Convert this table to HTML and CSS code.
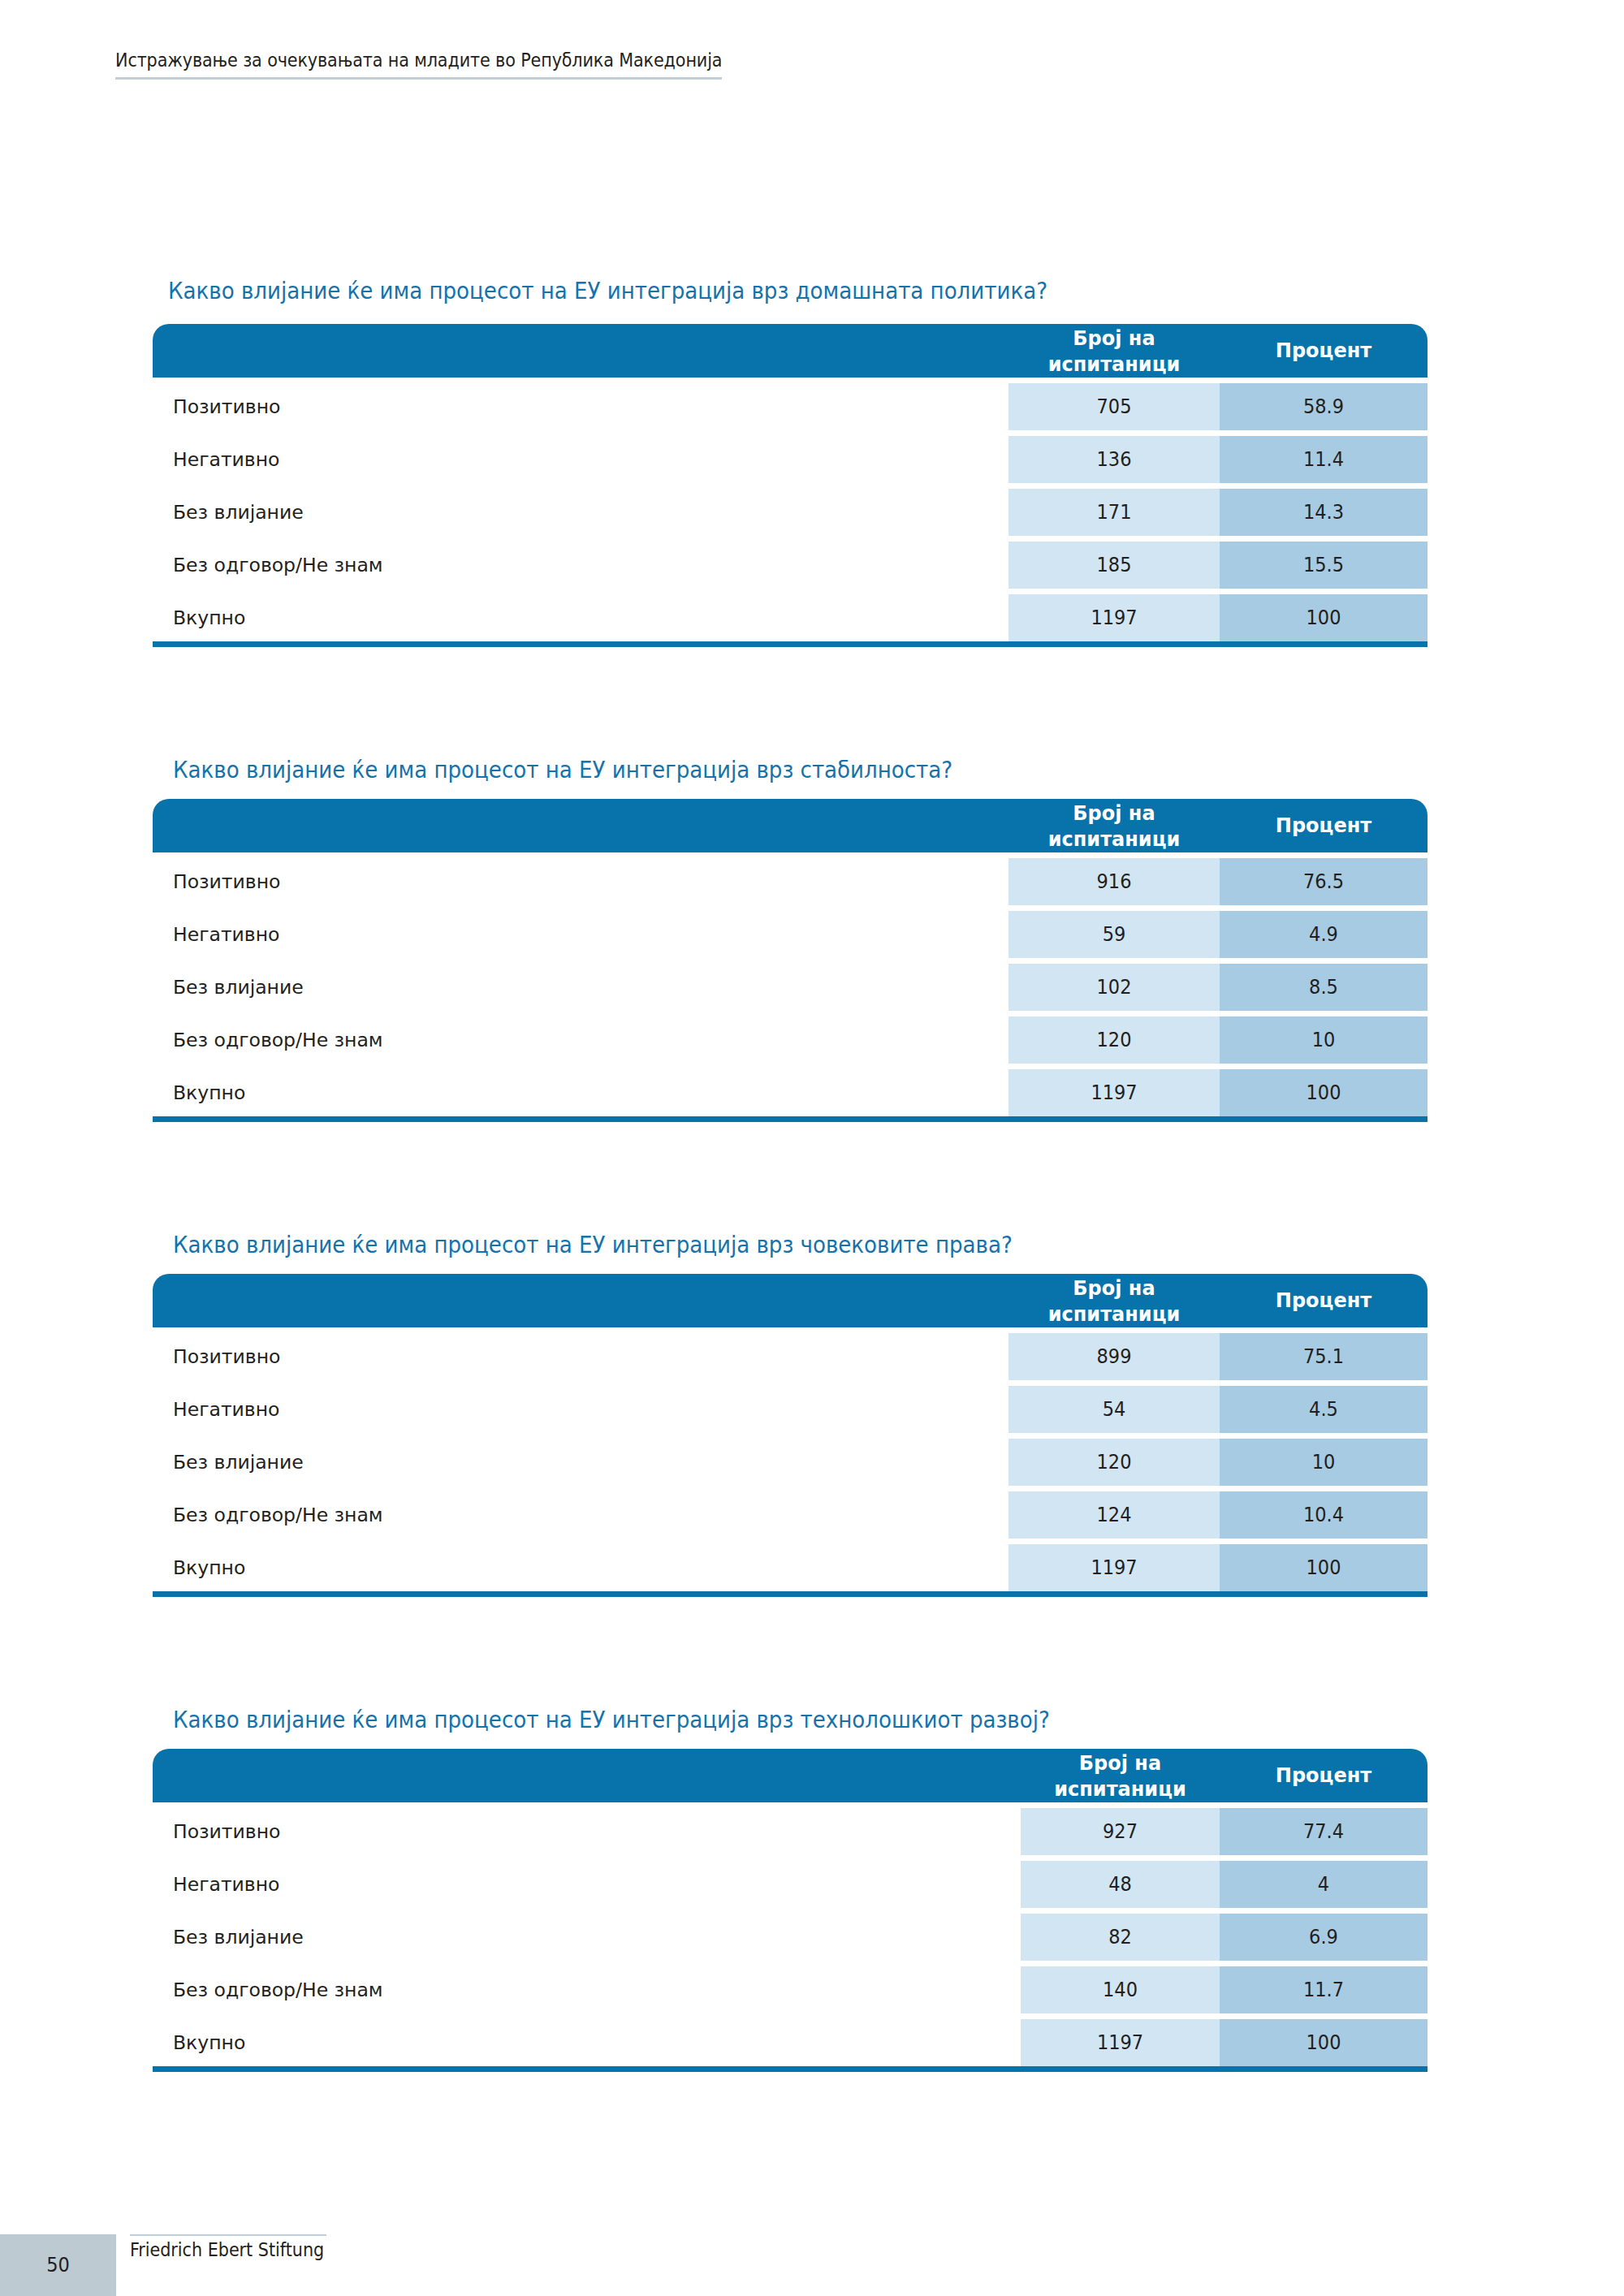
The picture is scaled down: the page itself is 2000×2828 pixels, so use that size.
FILE: index.html
```html
<!DOCTYPE html>
<html lang="mk">
<head>
<meta charset="utf-8">
<title>Истражување за очекувањата на младите во Република Македонија</title>
<link rel="stylesheet" href="styles.css">
</head>
<body>
<div class="page">
  <header class="running-head">
    <span class="running-title">Истражување за очекувањата на младите во Република Македонија</span>
  </header>

  <main class="tables">
    <section class="block block-first">
      <h2 class="q q-first">Какво влијание ќе има процесот на ЕУ интеграција врз домашната политика?</h2>
      <div class="tbl">
        <div class="thead">
          <div class="th th-label"></div>
          <div class="th th-n">Број на<br>испитаници</div>
          <div class="th th-p">Процент</div>
        </div>
        <div class="row"><div class="lbl">Позитивно</div><div class="n">705</div><div class="p">58.9</div></div>
        <div class="row"><div class="lbl">Негативно</div><div class="n">136</div><div class="p">11.4</div></div>
        <div class="row"><div class="lbl">Без влијание</div><div class="n">171</div><div class="p">14.3</div></div>
        <div class="row"><div class="lbl">Без одговор/Не знам</div><div class="n">185</div><div class="p">15.5</div></div>
        <div class="row"><div class="lbl">Вкупно</div><div class="n">1197</div><div class="p">100</div></div>
      </div>
    </section>

    <section class="block">
      <h2 class="q">Какво влијание ќе има процесот на ЕУ интеграција врз стабилноста?</h2>
      <div class="tbl">
        <div class="thead">
          <div class="th th-label"></div>
          <div class="th th-n">Број на<br>испитаници</div>
          <div class="th th-p">Процент</div>
        </div>
        <div class="row"><div class="lbl">Позитивно</div><div class="n">916</div><div class="p">76.5</div></div>
        <div class="row"><div class="lbl">Негативно</div><div class="n">59</div><div class="p">4.9</div></div>
        <div class="row"><div class="lbl">Без влијание</div><div class="n">102</div><div class="p">8.5</div></div>
        <div class="row"><div class="lbl">Без одговор/Не знам</div><div class="n">120</div><div class="p">10</div></div>
        <div class="row"><div class="lbl">Вкупно</div><div class="n">1197</div><div class="p">100</div></div>
      </div>
    </section>

    <section class="block">
      <h2 class="q">Какво влијание ќе има процесот на ЕУ интеграција врз човековите права?</h2>
      <div class="tbl">
        <div class="thead">
          <div class="th th-label"></div>
          <div class="th th-n">Број на<br>испитаници</div>
          <div class="th th-p">Процент</div>
        </div>
        <div class="row"><div class="lbl">Позитивно</div><div class="n">899</div><div class="p">75.1</div></div>
        <div class="row"><div class="lbl">Негативно</div><div class="n">54</div><div class="p">4.5</div></div>
        <div class="row"><div class="lbl">Без влијание</div><div class="n">120</div><div class="p">10</div></div>
        <div class="row"><div class="lbl">Без одговор/Не знам</div><div class="n">124</div><div class="p">10.4</div></div>
        <div class="row"><div class="lbl">Вкупно</div><div class="n">1197</div><div class="p">100</div></div>
      </div>
    </section>

    <section class="block">
      <h2 class="q">Какво влијание ќе има процесот на ЕУ интеграција врз технолошкиот развој?</h2>
      <div class="tbl tbl-narrow">
        <div class="thead">
          <div class="th th-label"></div>
          <div class="th th-n">Број на<br>испитаници</div>
          <div class="th th-p">Процент</div>
        </div>
        <div class="row"><div class="lbl">Позитивно</div><div class="n">927</div><div class="p">77.4</div></div>
        <div class="row"><div class="lbl">Негативно</div><div class="n">48</div><div class="p">4</div></div>
        <div class="row"><div class="lbl">Без влијание</div><div class="n">82</div><div class="p">6.9</div></div>
        <div class="row"><div class="lbl">Без одговор/Не знам</div><div class="n">140</div><div class="p">11.7</div></div>
        <div class="row"><div class="lbl">Вкупно</div><div class="n">1197</div><div class="p">100</div></div>
      </div>
    </section>
  </main>

  <footer class="foot">
    <div class="pageno">50</div>
    <div class="publisher">Friedrich Ebert Stiftung</div>
  </footer>
</div>
</body>
</html>
```

FILE: styles.css
```css
html, body {
  margin: 0;
  padding: 0;
  background: #ffffff;
}

body {
  font-family: "DejaVu Sans", "Liberation Sans", sans-serif;
  color: #231f20;
}

.running-title,
.q,
.n,
.p,
.pageno,
.publisher {
  font-family: "DejaVu Sans Condensed", "DejaVu Sans", "Liberation Sans", sans-serif;
  font-stretch: condensed;
}

.page {
  width: 2000px;
  min-height: 2828px;
  display: flex;
  flex-direction: column;
}

/* running head */
.running-head {
  padding-top: 59px;
  padding-left: 142px;
}

.running-title {
  display: inline-block;
  font-size: 23px;
  line-height: 30px;
  padding-bottom: 6px;
  border-bottom: 3px solid #c3cdd5;
  letter-spacing: -0.1px;
}

/* tables */
.tables {
  display: flex;
  flex-direction: column;
  gap: 131px;
  padding-left: 188px;
  width: 1570px;
  margin-top: 240px;
}

.q {
  margin: 0 0 16px 0;
  padding-left: 25px;
  font-size: 29px;
  line-height: 40px;
  font-weight: normal;
  color: #1672ab;
  white-space: nowrap;
}

.q-first {
  padding-left: 19px;
  margin-bottom: 21px;
}

.tbl {
  display: flex;
  flex-direction: column;
  gap: 7px;
  border-bottom: 7px solid #0872ab;
  --cols: 1054px 260px 256px;
}

.tbl-narrow {
  --cols: 1069px 245px 256px;
}

.thead,
.row {
  display: grid;
  grid-template-columns: var(--cols);
}

.thead {
  height: 66px;
  background: #0872ab;
  border-radius: 20px 20px 0 0;
  color: #ffffff;
  font-weight: bold;
  font-size: 24px;
  align-items: center;
}

.th {
  text-align: center;
  line-height: 32px;
}

.th-n {
  padding-top: 1px;
}

.row {
  height: 58px;
  line-height: 58px;
}

.lbl {
  padding-left: 25px;
  font-size: 23.5px;
}

.n,
.p {
  text-align: center;
  font-size: 25px;
}

.n {
  background: #d1e5f2;
}

.p {
  background: #a7cbe2;
}

/* footer */
.foot {
  margin-top: auto;
  height: 76px;
  display: flex;
  align-items: flex-start;
  gap: 17px;
}

.pageno {
  width: 143px;
  height: 76px;
  background: #bdcad2;
  font-size: 25px;
  line-height: 76px;
  text-align: center;
}

.publisher {
  width: 242px;
  border-top: 2px solid #c3cdd5;
  font-size: 23px;
  line-height: 28px;
  padding-top: 3px;
}
```
